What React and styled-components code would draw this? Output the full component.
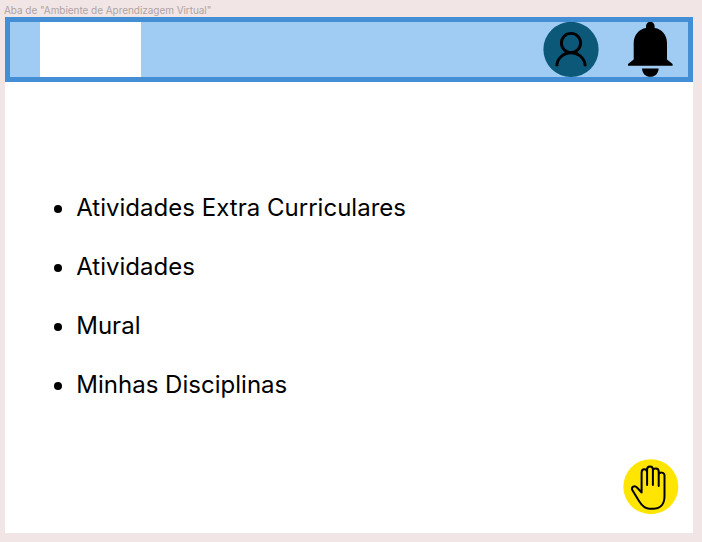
import React from 'react';
import styled, { createGlobalStyle } from 'styled-components';

const GlobalStyle = createGlobalStyle`
  * { box-sizing: border-box; }
  body { margin: 0; background: #f1e6e5; font-family: Inter, sans-serif; overflow: hidden; }
`;

const Canvas = styled.div`
  width: 702px;
  height: 542px;
  padding-left: 5px;
`;

const FrameLabel = styled.div`
  height: 17px;
  padding-top: 4px;
  margin-left: -1px;
  font-size: 10px;
  line-height: 12px;
  letter-spacing: -0.05px;
  color: #aea4a4;
  white-space: nowrap;
`;

const Frame = styled.main`
  width: 688.4px;
  height: 516px;
  display: flex;
  flex-direction: column;
  background: #fff;
`;

const Header = styled.header`
  height: 65px;
  flex: none;
  display: flex;
  align-items: stretch;
  justify-content: space-between;
  border: 5px solid #438ed5;
  background: #a0cbf3;
`;

const Logo = styled.div`
  width: 101px;
  margin-left: 30px;
  background: #fff;
`;

const Actions = styled.div`
  display: flex;
  gap: 29px;
  margin-right: 15.4px;
`;

const IconButton = styled.button`
  width: ${({ $width }) => $width}px;
  height: 56px;
  padding: 0;
  border: 0;
  background: none;
  svg { display: block; }
`;

const Menu = styled.ul`
  flex: 1;
  margin: 0;
  padding: 96px 0 0 48px;
  list-style: none;
`;

const MenuItem = styled.li`
  height: 59px;
  display: flex;
  align-items: flex-start;
  font-size: 24px;
  font-weight: 400;
  line-height: 59px;
  letter-spacing: 0.02px;
  color: #000;
  &::before {
    content: '';
    width: 8px;
    height: 8px;
    margin: 27px 14.2px 0 1px;
    border-radius: 50%;
    background: #000;
  }
`;

const Footer = styled.footer`
  display: flex;
  justify-content: flex-end;
  padding: 0 14.9px 18px 0;
`;

const items = ['Atividades Extra Curriculares', 'Atividades', 'Mural', 'Minhas Disciplinas'];

const UserIcon = () => (
  <svg width="56" height="56" viewBox="543 22 56 56" fill="none" stroke="#000" strokeWidth="2.9">
    <circle cx="571" cy="49.4" r="27.6" fill="#0b5879" stroke="none" />
    <circle cx="571" cy="43" r="9.6" />
    <path d="M556.8 66.3a14.2 13.6 0 0 1 28.4 0" />
  </svg>
);

const BellIcon = () => (
  <svg width="45" height="56" viewBox="628 22 45 56">
    <path d="M646 28V26a4.3 4.3 0 0 1 8.6 0V28C662 29 667 35 667 43V59.5L672.6 64V65.8H628V64L633.7 59.5V43C633.7 35 639 29 646 28Z" />
    <path d="M642 68.5H658.7C658.2 74 655 76.8 650.3 76.8S642.5 74 642 68.5Z" />
  </svg>
);

const HandIcon = () => (
  <svg width="56" height="56" viewBox="622.5 459 56 56" fill="none" stroke="#000" strokeWidth="2" strokeLinecap="round" strokeLinejoin="round">
    <circle cx="650.3" cy="486.7" r="27.5" fill="#ffe500" stroke="none" />
    <path d="M641.1 492.5V472.5C641.1 468.2 646.6 468.2 646.6 472.5V485M646.6 472.5V469.5C646.6 465.5 652.4 465.5 652.4 469.5V485M652.4 471C652.4 467.5 658.2 467.5 658.2 471.5V486M658.2 475C658.2 471.5 664 472 664 475.5V496C664 504 660 508.7 653 508.7H649C644 508.7 641 505 638.5 501L631.8 490C630.5 487 634 485 636.5 487.5L641.1 492.5" />
  </svg>
);

export default function App() {
  return (
    <>
      <GlobalStyle />
      <Canvas>
        <FrameLabel>Aba de "Ambiente de Aprendizagem Virtual"</FrameLabel>
        <Frame>
          <Header>
            <Logo />
            <Actions>
              <IconButton $width={56} aria-label="Perfil"><UserIcon /></IconButton>
              <IconButton $width={45} aria-label="Notificações"><BellIcon /></IconButton>
            </Actions>
          </Header>
          <Menu>
            {items.map((item) => <MenuItem key={item}>{item}</MenuItem>)}
          </Menu>
          <Footer>
            <IconButton $width={56} aria-label="Libras"><HandIcon /></IconButton>
          </Footer>
        </Frame>
      </Canvas>
    </>
  );
}
